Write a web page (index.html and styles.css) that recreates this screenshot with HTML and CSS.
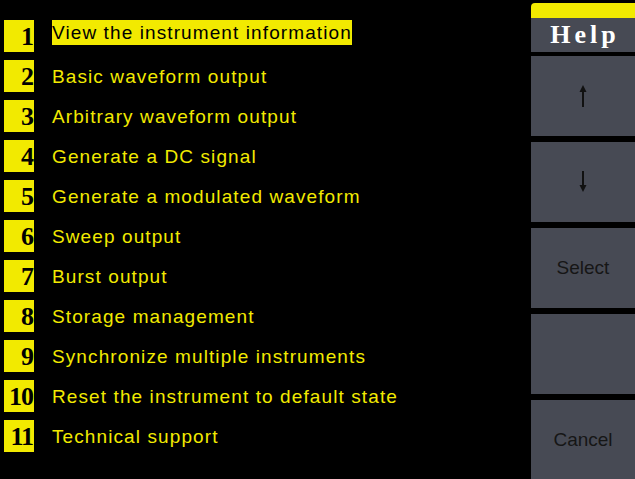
FILE: index.html
```html
<!DOCTYPE html>
<html lang="en">
<head>
  <meta charset="UTF-8">
  <title>Help</title>
  <link rel="stylesheet" href="styles.css">
</head>
<body>

  <div class="screen">
    <ul class="menu">
      <li class="item active"><span class="num">1</span><span class="label">View the instrument information</span></li>
      <li class="item"><span class="num">2</span><span class="label">Basic waveform output</span></li>
      <li class="item"><span class="num">3</span><span class="label">Arbitrary waveform output</span></li>
      <li class="item"><span class="num">4</span><span class="label">Generate a DC signal</span></li>
      <li class="item"><span class="num">5</span><span class="label">Generate a modulated waveform</span></li>
      <li class="item"><span class="num">6</span><span class="label">Sweep output</span></li>
      <li class="item"><span class="num">7</span><span class="label">Burst output</span></li>
      <li class="item"><span class="num">8</span><span class="label">Storage management</span></li>
      <li class="item"><span class="num">9</span><span class="label">Synchronize multiple instruments</span></li>
      <li class="item"><span class="num">10</span><span class="label">Reset the instrument to default state</span></li>
      <li class="item"><span class="num">11</span><span class="label">Technical support</span></li>
    </ul>

    <div class="side">
      <div class="title">
        <div class="title-bar"></div>
        <div class="title-text">Help</div>
      </div>
      <div class="softkey">
        <svg width="10" height="24" viewBox="0 0 10 24">
          <path d="M5 23 V4" stroke="#111" stroke-width="2" fill="none"/>
          <path d="M1.5 8 L5 1 L8.5 8 Z" fill="#111"/>
        </svg>
      </div>
      <div class="softkey">
        <svg width="10" height="22" viewBox="0 0 10 22">
          <path d="M5 0 V18" stroke="#111" stroke-width="2" fill="none"/>
          <path d="M1.5 14 L5 21 L8.5 14 Z" fill="#111"/>
        </svg>
      </div>
      <div class="softkey">Select</div>
      <div class="softkey"></div>
      <div class="softkey">Cancel</div>
    </div>
  </div>

</body>
</html>
```

FILE: styles.css
```css
html, body {
  margin: 0;
  padding: 0;
  background: #000;
  overflow: hidden;
}

.screen {
  display: flex;
  width: 635px;
  height: 479px;
}

.menu {
  flex: 1;
  list-style: none;
  margin: 0;
  padding: 20px 0 0 4px;
  display: flex;
  flex-direction: column;
  gap: 8px;
}

.item {
  display: flex;
  align-items: center;
  height: 32px;
}

.num {
  width: 30px;
  height: 32px;
  box-sizing: border-box;
  padding-right: 1px;
  background: #f2ea00;
  color: #000;
  font-family: "Liberation Serif", serif;
  font-weight: bold;
  font-size: 26px;
  line-height: 33px;
  text-align: right;
  letter-spacing: -1px;
}

.label {
  margin-left: 18px;
  color: #f2ea00;
  font-family: "Liberation Sans", sans-serif;
  font-size: 19px;
  line-height: 25px;
  letter-spacing: 1.1px;
}

.item.active {
  align-items: flex-start;
}

.item.active .label {
  background: #f2ea00;
  color: #000;
}

.side {
  width: 104px;
  display: flex;
  flex-direction: column;
}

.title {
  margin-top: 3px;
}

.title-bar {
  height: 15px;
  background: #f2ea00;
  border-top-left-radius: 4px;
}

.title-text {
  height: 34px;
  background: #474a54;
  color: #fff;
  font-family: "Liberation Serif", serif;
  font-weight: bold;
  font-size: 26px;
  line-height: 34px;
  text-align: center;
  letter-spacing: 4px;
  text-indent: 4px;
}

.softkey {
  height: 80px;
  margin-top: 6px;
  flex-shrink: 0;
  background: #474a54;
  color: #161616;
  font-family: "Liberation Sans", sans-serif;
  font-size: 19px;
  display: flex;
  align-items: center;
  justify-content: center;
}

.title + .softkey {
  margin-top: 4px;
}
```
